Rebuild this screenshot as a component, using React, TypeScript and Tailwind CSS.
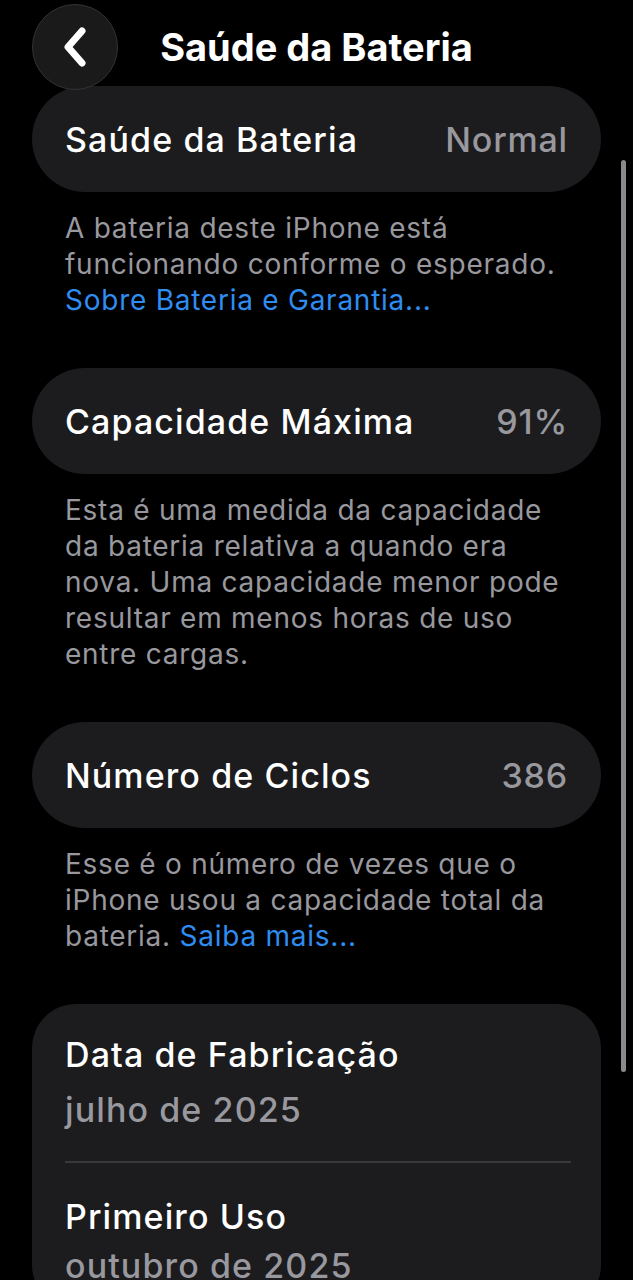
import { ReactNode } from 'react'

const font = { fontFamily: 'Inter, "Noto Sans", sans-serif' }

function RowCard({ label, value }: { label: string; value: string }) {
  return (
    <div className="mx-[32px] h-[106px] rounded-full bg-[#1c1c1e] px-[33px] flex items-center justify-between">
      <span className="text-[34px] font-medium text-white tracking-[1.1px]">{label}</span>
      <span className="text-[34px] font-medium text-[#98989e] tracking-[0.8px]">{value}</span>
    </div>
  )
}

function Note({ children }: { children: ReactNode }) {
  return (
    <p className="px-[65px] pt-[18px] pb-[50px] text-[28px] leading-[36px] text-[#98989e] tracking-[0.75px]">
      {children}
    </p>
  )
}

function Link({ children }: { children: ReactNode }) {
  return <span className="text-[#2f8cf0]">{children}</span>
}

export default function App() {
  return (
    <div className="relative w-[633px] h-[1280px] overflow-hidden bg-black" style={font}>
      <header className="relative h-[86px] flex items-start">
        <button className="ml-[32px] mt-[4px] w-[86px] h-[86px] rounded-full bg-[#1a1a1b] border border-[#333336] flex items-center justify-center">
          <svg width="34" height="44" viewBox="0 0 34 44" fill="none">
            <path d="M24 6 L10 22 L24 38" stroke="white" strokeWidth="7" strokeLinecap="round" strokeLinejoin="round" />
          </svg>
        </button>
        <h1 className="absolute left-0 right-0 top-[24px] text-center text-[38px] leading-[46px] font-bold text-white tracking-[0px]">
          Saúde da Bateria
        </h1>
      </header>

      <RowCard label="Saúde da Bateria" value="Normal" />
      <Note>
        A bateria deste iPhone está
        <br />
        funcionando conforme o esperado.
        <br />
        <Link>Sobre Bateria e Garantia...</Link>
      </Note>

      <RowCard label="Capacidade Máxima" value="91%" />
      <Note>
        Esta é uma medida da capacidade
        <br />
        da bateria relativa a quando era
        <br />
        nova. Uma capacidade menor pode
        <br />
        resultar em menos horas de uso
        <br />
        entre cargas.
      </Note>

      <RowCard label="Número de Ciclos" value="386" />
      <Note>
        Esse é o número de vezes que o
        <br />
        iPhone usou a capacidade total da
        <br />
        bateria. <Link>Saiba mais...</Link>
      </Note>

      <div className="mx-[32px] rounded-[44px] bg-[#1c1c1e] pl-[33px] pr-[30px] pt-[28px] pb-[20px]">
        <div className="pb-[28px]">
          <div className="text-[34px] font-medium leading-[46px] text-white tracking-[1.1px]">Data de Fabricação</div>
          <div className="mt-[9px] text-[34px] font-medium leading-[46px] text-[#98989e] tracking-[1.1px]">julho de 2025</div>
        </div>
        <div className="h-[2px] bg-[#38383a]" />
        <div className="pt-[31px]">
          <div className="text-[34px] font-medium leading-[46px] text-white tracking-[1.1px]">Primeiro Uso</div>
          <div className="mt-[3px] text-[34px] font-medium leading-[46px] text-[#98989e] tracking-[1.1px]">outubro de 2025</div>
        </div>
      </div>

      <div className="absolute right-[7px] top-[160px] w-[5px] h-[912px] rounded-full bg-[#8a8a8e]" />
    </div>
  )
}
